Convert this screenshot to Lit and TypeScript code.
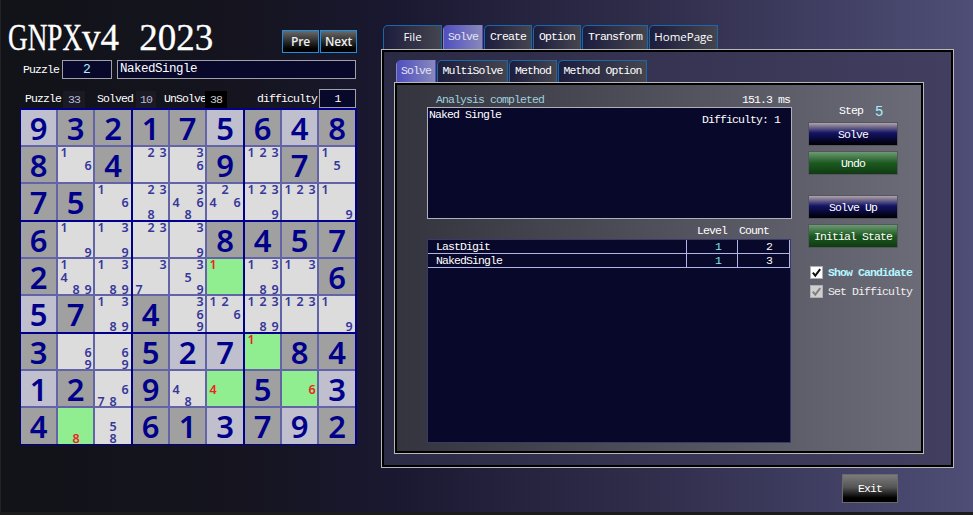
import { LitElement, html, css } from "lit";
import { customElement } from "lit/decorators.js";

type Cell = { v?: number; l?: boolean; c?: number[]; g?: boolean };
const D = (v: number): Cell => ({ v });
const L = (v: number): Cell => ({ v, l: true });
const C = (...c: number[]): Cell => ({ c });
const G = (r: number): Cell => ({ c: [r], g: true });

const ROWS: Cell[][] = [
  [L(9), D(3), D(2), D(1), D(7), L(5), D(6), L(4), D(8)],
  [D(8), C(1, 6), D(4), C(2, 3), C(3, 6), D(9), C(1, 2, 3), D(7), C(1, 5)],
  [D(7), D(5), C(1, 6), C(2, 3, 8), C(3, 4, 6, 8), C(2, 4, 6), C(1, 2, 3, 9), C(1, 2, 3), C(1, 9)],
  [D(6), C(1, 9), C(1, 3, 9), C(2, 3), C(3, 9), D(8), D(4), D(5), D(7)],
  [D(2), C(1, 4, 8, 9), C(1, 3, 8, 9), C(3, 7), C(3, 5, 9), G(1), C(1, 3, 8, 9), C(1, 3), D(6)],
  [L(5), D(7), C(1, 3, 8, 9), D(4), C(3, 6, 9), C(1, 2, 6), C(1, 2, 3, 8, 9), C(1, 2, 3), C(1, 9)],
  [D(3), C(6, 9), C(6, 9), D(5), L(2), L(7), G(1), D(8), D(4)],
  [L(1), D(2), C(6, 7, 8), D(9), C(4, 8), G(4), D(5), G(6), L(3)],
  [D(4), G(8), C(5, 8), D(6), D(1), L(3), D(7), L(9), D(2)],
];

const tabs = [
  { t: "File", w: 59, cls: "sans" },
  { t: "Solve", w: 40, cls: "sel" },
  { t: "Create", w: 48, cls: "" },
  { t: "Option", w: 48, cls: "" },
  { t: "Transform", w: 66, cls: "" },
  { t: "HomePage", w: 69, cls: "sans" },
];
const subTabs = [
  { t: "Solve", w: 40, cls: "sel" },
  { t: "MultiSolve", w: 71, cls: "" },
  { t: "Method", w: 48, cls: "" },
  { t: "Method Option", w: 89, cls: "" },
];

@customElement("app-root")
export class AppRoot extends LitElement {
  static styles = css`
    :host {
      display: block;
      width: 973px;
      height: 515px;
      font-family: "Liberation Mono", monospace;
      font-size: 11.5px;
      letter-spacing: -0.9px;
      color: #fff;
      overflow: hidden;
    }
    * { box-sizing: border-box; }
    .win {
      display: flex;
      width: 973px;
      height: 515px;
      border-left: 1px solid #222;
      border-bottom: 3px solid #1c1c1c;
      background: linear-gradient(90deg, #111318 0%, #15141f 25%, #1a1830 40%, #33304f 70%, #4e4e76 100%);
    }
    .left { width: 380px; flex: none; display: flex; flex-direction: column; }
    .head { display: flex; height: 60px; padding: 19px 24px 0 7px; justify-content: space-between; }
    .title {
      font-family: "Liberation Serif", serif;
      font-size: 37px;
      line-height: 37px;
      letter-spacing: 0;
      word-spacing: 11px;
      white-space: nowrap;
      -webkit-text-stroke: 0.3px #fff;
    }
    .squeeze { display: inline-block; transform: scaleX(0.735); transform-origin: left; margin-right: -26.7px; }
    .nav { display: flex; gap: 1px; padding-top: 11px; }
    .nav button {
      width: 37px; height: 23px; padding: 0;
      border: 1px solid #1e90e0;
      background: linear-gradient(180deg, #6a6a6a, #000 85%);
      color: #eee;
      font: 600 12px "Open Sans", sans-serif;
      letter-spacing: -0.2px;
    }
    .pzrow { display: flex; height: 19px; padding-left: 22px; align-items: center; }
    .lab { white-space: nowrap; flex: none; }
    .box {
      background: #08082a;
      border: 1px solid #a0a0a8;
      height: 19px;
      line-height: 17px;
      display: block;
      flex: none;
    }
    .pzno { width: 50px; margin-left: 3px; text-align: center; color: #aef; font-size: 13px; letter-spacing: 0; }
    .pzname { width: 239px; margin-left: 5px; padding-left: 2px; font-size: 12.5px; letter-spacing: -0.5px; }
    .stats { display: flex; height: 19px; margin-top: 10px; padding-left: 24px; align-items: center; }
    .stat { display: block; flex: none; height: 17px; line-height: 17px; text-align: center; color: #bbd; margin-top: 1px; background: #1a1a24; }
    .s33 { width: 22px; margin-left: 2px; }
    .sl2 { margin-left: 12px; }
    .s10 { width: 20px; margin-left: 3px; }
    .sl3 { margin-left: 8px; }
    .s38 { width: 22px; margin-left: -1px; background: #000; color: #ccc; }
    .sl4 { margin-left: 30px; }
    .dif { width: 37px; margin-left: 2px; text-align: center; }
    .board {
      margin: 0 0 0 19px;
      width: 337px;
      height: 337px;
      padding: 2px 2px 2px 1px;
      background: #00008b;
      display: grid;
      grid-template-columns: repeat(3, 110px);
      grid-template-rows: repeat(3, 110px);
      gap: 2px;
      letter-spacing: 0;
    }
    .block {
      display: grid;
      grid-template-columns: 35px 35px 36px;
      grid-template-rows: 35px 35px 36px;
      gap: 2px;
      background: #6363a8;
    }
    .cell {
      overflow: hidden;
      font-family: "Noto Sans", sans-serif;
      color: #00008b;
    }
    .num {
      background: #a0a0a0;
      font-size: 31px;
      font-weight: 600;
      line-height: 37px;
      text-align: center;
    }
    .num.l { background: #bfbfcd; }
    .cand {
      background: #dcdcdc;
      display: grid;
      grid-template-columns: repeat(3, 12px);
      grid-template-rows: repeat(3, 12.7px);
      font-size: 12.5px;
      font-weight: 600;
      line-height: 12.7px;
      text-align: center;
      color: #36369a;
    }
    .cand.g { background: #90ee90; color: #ee2222; }
    .right { flex: 1; padding: 25px 0 0 0; display: flex; flex-direction: column; }
    .tabs { display: flex; gap: 1px; height: 24px; padding-left: 2px; }
    .tab {
      display: block;
      height: 100%;
      text-align: center;
      line-height: 22px;
      border: 1px solid #1a68a8;
      border-bottom: 0;
      border-radius: 5px 0 0 0;
      background: linear-gradient(90deg, #1c1c3e, #45454f);
      white-space: nowrap;
    }
    .tab.sel { border-color: transparent; background: linear-gradient(90deg, #4f4fc0, #8888bb); color: #e4e4f4; }
    .tab.sans { font: 500 11.5px "Open Sans", sans-serif; line-height: 22px; letter-spacing: 0; }
    .panel {
      width: 573px;
      height: 419px;
      border: 1px solid #b8b8b8;
      outline: 2px solid #000;
      outline-offset: -3px;
      padding: 10px 0 0 12px;
      background: linear-gradient(90deg, #2a2a44, #423e60);
    }
    .subtabs { height: 22px; padding-left: 2px; }
    .subtabs .tab { line-height: 20px; }
    .inner {
      width: 530px;
      height: 372px;
      border: 1px solid #b8b8b8;
      outline: 2px solid #000;
      outline-offset: -3px;
      background: linear-gradient(90deg, #34343f, #6c6c78);
      display: flex;
      padding: 3px 0 0 32px;
      gap: 16px;
    }
    .main { width: 365px; display: flex; flex-direction: column; }
    .status { display: flex; justify-content: space-between; height: 21px; padding: 7px 2px 0 9px; line-height: 14px; }
    .status .an { color: #9fd0dc; }
    .text {
      height: 112px;
      background: #08082a;
      border: 1px solid #b0b0b8;
      position: relative;
      padding-left: 1px;
      line-height: 13px;
    }
    .dl { position: absolute; right: 11px; top: 5px; }
    .lhead { display: flex; height: 20px; padding: 5px 0 0 270px; line-height: 14px; gap: 12px; }
    .lhead span { width: 30px; }
    .list {
      width: 364px;
      height: 204px;
      background: #08082a;
      border: 1px solid #3a3a68;
    }
    .row {
      display: grid;
      grid-template-columns: 259px 51px 1fr;
      height: 14px;
      line-height: 13px;
      border-bottom: 1px solid #b0b4ea;
    }
    .row span { border-right: 1px solid #b0b4ea; }
    .row .nm { padding-left: 8px; }
    .row .lv { padding-left: 28px; color: #7fe8ea; }
    .row .ct { padding-left: 28px; }
    .side { width: 105px; display: flex; flex-direction: column; }
    .step { height: 36px; flex: none; padding: 18px 0 0 31px; display: flex; gap: 12px; line-height: 14px; }
    .step b { font: 400 14px "Liberation Mono", monospace; color: #aef; }
    .act {
      display: block;
      flex: none;
      width: 90px;
      height: 24px;
      padding: 0;
      border: 1px solid #55555e;
      color: #fff;
      font: inherit;
      letter-spacing: inherit;
      text-align: center;
    }
    .blue { background: linear-gradient(180deg, #b0a4a8 0%, #141464 45%, #05052a 80%, #000 100%); }
    .green { background: linear-gradient(180deg, #6c9a72 0%, #1c5a20 50%, #103a12 100%); }
    .g5 { margin-top: 5px; }
    .g20 { margin-top: 20px; }
    .checks { margin-top: 18px; padding-left: 2px; display: flex; flex-direction: column; gap: 6px; }
    .chk { display: flex; align-items: center; gap: 5px; height: 13px; white-space: nowrap; }
    .chk svg { flex: none; width: 13px; height: 13px; }
    .chk.on { color: #b4f6ff; font-weight: 700; }
    .chk.off { color: #f0f0f0; }
    .foot { padding: 6px 0 0 461px; }
    .exit {
      display: block;
      width: 56px;
      height: 29px;
      padding: 0;
      border: 1px solid #6a6a6a;
      background: linear-gradient(180deg, #7c7c7c 0%, #555 45%, #000 85%);
      color: #fff;
      font: inherit;
      letter-spacing: inherit;
    }
  `;

  private cell(c: Cell) {
    if (c.v !== undefined) {
      return html`<div class="cell num ${c.l ? "l" : ""}">${c.v}</div>`;
    }
    return html`<div class="cell cand ${c.g ? "g" : ""}">
      ${[1, 2, 3, 4, 5, 6, 7, 8, 9].map((n) => html`<span>${c.c!.includes(n) ? n : ""}</span>`)}
    </div>`;
  }

  private block(br: number, bc: number) {
    const out = [];
    for (let r = 0; r < 3; r++)
      for (let k = 0; k < 3; k++) out.push(this.cell(ROWS[br * 3 + r][bc * 3 + k]));
    return html`<div class="block">${out}</div>`;
  }

  private check(bg: string, stroke: string) {
    return html`<svg viewBox="0 0 13 13">
      <rect x="0.5" y="0.5" width="12" height="12" fill="${bg}" stroke="#b0b0b0"></rect>
      <path d="M2.8 6.6 L5.3 9.6 L10.2 3.2" fill="none" stroke="${stroke}" stroke-width="2"></path>
    </svg>`;
  }

  render() {
    const blocks = [];
    for (let r = 0; r < 3; r++) for (let c = 0; c < 3; c++) blocks.push(this.block(r, c));
    return html`
      <div class="win">
        <div class="left">
          <div class="head">
            <div class="title"><span class="squeeze">GNPX</span>v4 2023</div>
            <div class="nav"><button>Pre</button><button>Next</button></div>
          </div>
          <div class="pzrow">
            <span class="lab">Puzzle</span>
            <span class="box pzno">2</span>
            <span class="box pzname">NakedSingle</span>
          </div>
          <div class="stats">
            <span class="lab">Puzzle</span><span class="stat s33">33</span>
            <span class="lab sl2">Solved</span><span class="stat s10">10</span>
            <span class="lab sl3">UnSolve</span><span class="stat s38">38</span>
            <span class="lab sl4">difficulty</span><span class="box dif">1</span>
          </div>
          <div class="board">${blocks}</div>
        </div>
        <div class="right">
          <div class="tabs">
            ${tabs.map(
              (t) => html`<div class="tab ${t.cls}" style="width:${t.w}px">${t.t}</div>`
            )}
          </div>
          <div class="panel">
            <div class="tabs subtabs">
              ${subTabs.map(
                (t) => html`<div class="tab ${t.cls}" style="width:${t.w}px">${t.t}</div>`
              )}
            </div>
            <div class="inner">
              <div class="main">
                <div class="status"><span class="an">Analysis completed</span><span>151.3 ms</span></div>
                <div class="text">Naked Single<span class="dl">Difficulty: 1</span></div>
                <div class="lhead"><span>Level</span><span>Count</span></div>
                <div class="list">
                  <div class="row"><span class="nm">LastDigit</span><span class="lv">1</span><span class="ct">2</span></div>
                  <div class="row"><span class="nm">NakedSingle</span><span class="lv">1</span><span class="ct">3</span></div>
                </div>
              </div>
              <div class="side">
                <div class="step"><span>Step</span><b>5</b></div>
                <button class="act blue">Solve</button>
                <button class="act green g5">Undo</button>
                <button class="act blue g20">Solve Up</button>
                <button class="act green g5">Initial State</button>
                <div class="checks">
                  <div class="chk on">${this.check("#fff", "#111")}Show Candidate</div>
                  <div class="chk off">${this.check("#cfcfcf", "#7f7f7f")}Set Difficulty</div>
                </div>
              </div>
            </div>
          </div>
          <div class="foot"><button class="exit">Exit</button></div>
        </div>
      </div>
    `;
  }
}
